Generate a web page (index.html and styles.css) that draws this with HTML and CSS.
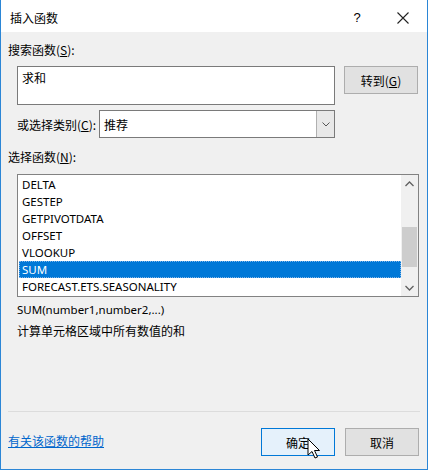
FILE: index.html
```html
<!DOCTYPE html>
<html>
<head>
<meta charset="utf-8">
<link rel="stylesheet" href="styles.css">
</head>
<body>
<div class="window">
  <div class="titlebar">
    <span class="title">插入函数</span>
    <span class="help-btn">?</span>
    <span class="close-btn">
      <svg width="12" height="12" viewBox="0 0 12 12"><path d="M0.5 0.5 L11.5 11.5 M11.5 0.5 L0.5 11.5" stroke="#222" stroke-width="1.1" fill="none"/></svg>
    </span>
  </div>
  <div class="content">
    <div class="label top-label">搜索函数(<u>S</u>):</div>
    <div class="search-row">
      <div class="search-box">求和</div>
      <div class="btn btn-gray">转到(<u>G</u>)</div>
    </div>
    <div class="cat-row">
      <span class="label">或选择类别(<u>C</u>):</span>
      <div class="select">
        <span class="select-text">推荐</span>
        <span class="select-arrow">
          <svg width="8" height="5" viewBox="0 0 8 5"><path d="M0.5 0.5 L4 4 L7.5 0.5" stroke="#555" stroke-width="1" fill="none"/></svg>
        </span>
      </div>
    </div>
    <div class="label list-label">选择函数(<u>N</u>):</div>
    <div class="listbox">
      <ul class="items">
        <li>DELTA</li>
        <li>GESTEP</li>
        <li>GETPIVOTDATA</li>
        <li>OFFSET</li>
        <li>VLOOKUP</li>
        <li class="selected">SUM</li>
        <li>FORECAST.ETS.SEASONALITY</li>
      </ul>
      <div class="scrollbar">
        <span class="arrow">
          <svg width="9" height="6" viewBox="0 0 9 6"><path d="M0.5 5 L4.5 1 L8.5 5" stroke="#606060" stroke-width="1.3" fill="none"/></svg>
        </span>
        <div class="track"><div class="thumb"></div></div>
        <span class="arrow">
          <svg width="9" height="6" viewBox="0 0 9 6"><path d="M0.5 1 L4.5 5 L8.5 1" stroke="#606060" stroke-width="1.3" fill="none"/></svg>
        </span>
      </div>
    </div>
    <div class="desc">SUM(number1,number2,...)</div>
    <div class="desc desc2">计算单元格区域中所有数值的和</div>
  </div>
  <div class="separator"></div>
  <div class="footer">
    <a class="help-link">有关该函数的帮助</a>
    <div class="buttons">
      <div class="btn btn-default">确定
        <svg class="cursor" width="14" height="22" viewBox="0 0 14 22"><path d="M1 1 L1 17 L5 13.5 L8 20 L10.5 19 L7.5 12.5 L12.5 12.5 Z" fill="#fff" stroke="#000" stroke-width="1" stroke-linejoin="round"/></svg>
      </div>
      <div class="btn btn-gray">取消</div>
    </div>
  </div>
</div>
</body>
</html>
```
FILE: styles.css
```css
* { box-sizing: border-box; }
html, body { margin: 0; padding: 0; }
body {
  width: 428px;
  height: 470px;
  font-family: "Noto Sans CJK SC", "Noto Sans", sans-serif;
  font-size: 12px;
  color: #000;
  background: #f0f0f0;
}
u { text-decoration: underline; text-underline-offset: 1px; }
.window {
  width: 428px;
  height: 470px;
  border-left: 1px solid #2b86d6;
  border-right: 1px solid #2b86d6;
  border-bottom: 1px solid #2b86d6;
  background: #f0f0f0;
  display: flex;
  flex-direction: column;
}
.titlebar {
  height: 32px;
  background: #fff;
  display: flex;
  align-items: center;
  padding-left: 9px;
  padding-top: 2px;
}
.title { flex: 1; font-size: 12px; }
.help-btn { width: 46px; text-align: center; font-size: 13px; margin-right: 0; font-family: "Liberation Sans", sans-serif; }
.close-btn { width: 46px; display: flex; justify-content: center; padding-top: 1px; margin-right: 1px; }
.content {
  padding: 0 0 0 7px;
  display: flex;
  flex-direction: column;
  height: 379px;
}
.label { line-height: 17px; }
.top-label { margin-top: 9px; }
.search-row {
  display: flex;
  margin-top: 8px;
  padding-left: 9px;
}
.search-box {
  width: 318px;
  height: 39px;
  background: #fff;
  border: 1px solid #7a7a7a;
  padding: 2px 4px;
  line-height: 17px;
}
.btn {
  width: 74px;
  height: 28px;
  display: flex;
  align-items: center;
  justify-content: center;
  border: 1px solid #adadad;
  background: #e1e1e1;
  position: relative;
}
.search-row .btn { margin-left: 9px; }
.cat-row {
  display: flex;
  align-items: center;
  margin-top: 5px;
  padding-left: 9px;
}
.cat-row .label { width: 82px; }
.select {
  width: 236px;
  height: 28px;
  background: #fff;
  border: 1px solid #7a7a7a;
  display: flex;
  align-items: center;
}
.select-text { flex: 1; padding-left: 4px; }
.select-arrow {
  width: 18px;
  height: 26px;
  background: #e8e8e8;
  border-left: 1px solid #b0b0b0;
  display: flex;
  align-items: center;
  justify-content: center;
}
.list-label { margin-top: 10px; }
.listbox {
  margin-top: 9px;
  margin-left: 9px;
  width: 402px;
  height: 123px;
  background: #fff;
  border: 1px solid #828282;
  display: flex;
  padding: 1px 0 1px 1px;
}
.items {
  list-style: none;
  margin: 0;
  padding: 0;
  flex: 1;
}
.items li {
  height: 17px;
  line-height: 17px;
  padding-left: 3px;
  font-family: "Noto Sans", "Noto Sans CJK SC", sans-serif;
  font-size: 11.5px;
}
.items li.selected {
  background: #0078d7;
  color: #fff;
  outline: 1px dotted #7fb4e8;
  outline-offset: -1px;
}
.scrollbar {
  width: 17px;
  margin-top: -1px;
  margin-bottom: -1px;
  background: #f0f0f0;
  display: flex;
  flex-direction: column;
}
.arrow {
  height: 17px;
  display: flex;
  align-items: center;
  justify-content: center;
}
.track { flex: 1; padding-top: 35px; display: flex; justify-content: center; }
.thumb { width: 15px; height: 40px; background: #cdcdcd; }
.desc {
  margin-top: 4px;
  padding-left: 9px;
  line-height: 17px;
  font-family: "Noto Sans", "Noto Sans CJK SC", sans-serif;
  font-size: 11.5px;
}
.desc2 { font-family: "Noto Sans CJK SC", sans-serif; font-size: 12px; }
.separator {
  height: 1px;
  background: #dcdcdc;
  margin: 0 7px 0 7px;
}
.footer {
  display: flex;
  align-items: center;
  padding: 16px 8px 0 7px;
}
.help-link {
  flex: 1;
  color: #0066cc;
  text-decoration: underline;
  line-height: 17px;
  margin-top: -4px;
}
.buttons { display: flex; gap: 10px; }
.btn-default {
  border: 1px solid #0078d7;
  background: #e5f1fb;
}
.cursor {
  position: absolute;
  left: 45px;
  top: 9px;
}
```
